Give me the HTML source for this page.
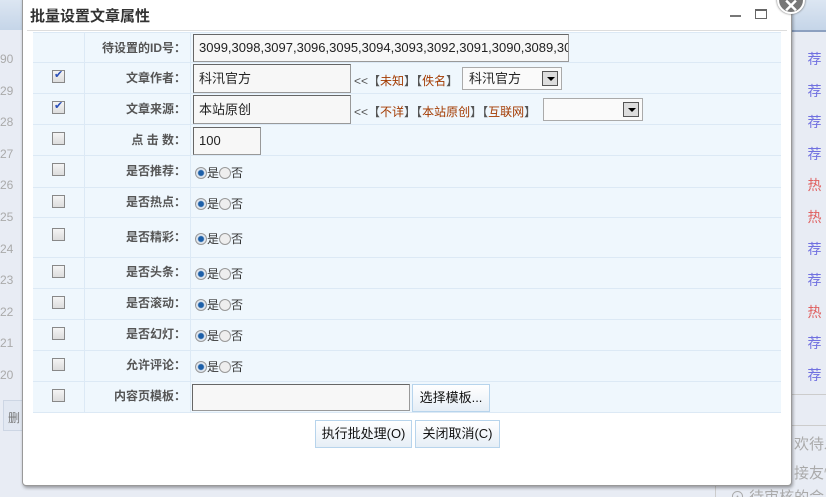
<!DOCTYPE html>
<html><head><meta charset="utf-8"><style>
*{box-sizing:border-box;margin:0;padding:0}
html,body{width:826px;height:497px;overflow:hidden}
body{background:#e8ecf4;font-family:"Liberation Sans","Noto Sans CJK SC",sans-serif;font-size:12px;color:#333;position:relative}
.a{position:absolute;white-space:nowrap}
.dlg{position:absolute;left:22px;top:-6px;width:770px;height:492px;background:#fff;border:1px solid #999;border-radius:4px;box-shadow:1px 2px 3px rgba(0,0,0,.35)}
.row{position:absolute;left:33px;width:748px;background:#eff7fd;border-bottom:1px solid #dce9f5}
.row .c1{position:absolute;left:0;top:0;bottom:0;width:52px;border-right:1px solid #dce9f5}
.row .c2{position:absolute;left:52px;top:0;bottom:0;width:106px;border-right:1px solid #dce9f5;text-align:right;padding-right:4px;font-weight:bold;color:#555;font-size:12px}
.cb{position:absolute;left:19px;width:13px;height:13px;border:1px solid #888;background:linear-gradient(#f4f4f4,#ddd)}
.cb.k::after{content:"✔";position:absolute;left:1px;top:-3px;font-size:11px;color:#2a4fb8}
.inp{position:absolute;background:#f7f7f7;border:1px solid #999;border-top-color:#666;border-left-color:#666;font-size:13px;padding-left:5px;color:#222;white-space:nowrap;overflow:hidden}
.sel{position:absolute;background:#fafafa;border:1px solid #aaa;font-size:13px;padding-left:6px;color:#222}
.sel i{position:absolute;right:3px;top:3px;width:16px;height:15px;border:1px solid #555;background:#ddd}
.sel i::after{content:"";position:absolute;left:4px;top:5px;border-left:4px solid transparent;border-right:4px solid transparent;border-top:4px solid #000}
.r{display:inline-block;width:12px;height:12px;border-radius:50%;border:1px solid #999;background:#eee;vertical-align:-2px}
.r.on{background:radial-gradient(circle,#1c5fa8 0 2.5px,#dfe6ee 3.5px)}
.btn{position:absolute;border:1px solid #b7d4ec;background:linear-gradient(#fff,#e6eef6);font-size:13px;color:#111;text-align:center;white-space:nowrap}
.lk{color:#a33a00}
.gr{color:#555}
</style></head><body>
<div class="a" style="left:0;top:0;width:826px;height:30px;background:linear-gradient(#dce6f2,#c5d5e8)"></div>
<div class="a" style="left:0;top:44px;color:#aaa;font-size:12px;line-height:31.6px;white-space:normal">90<br>29<br>28<br>27<br>26<br>25<br>24<br>23<br>22<br>21<br>20</div>
<div class="a" style="left:3px;top:400px;width:20px;height:31px;border:1px solid #cdd6e4;background:#e2e8f2;color:#777;padding:8px 0 0 4px">删</div>
<div class="a" style="left:803px;top:44px;width:23px;color:#7070e0;font-size:14px;line-height:31.6px;text-align:center;white-space:normal">荐<br>荐<br>荐<br>荐<br><span style="color:#e06060">热</span><br><span style="color:#e06060">热</span><br>荐<br>荐<br><span style="color:#e06060">热</span><br>荐<br>荐</div>
<div class="a" style="left:792px;top:30px;width:34px;height:2px;background:#8ca0c0"></div>
<div class="a" style="left:792px;top:394px;width:34px;height:1px;background:#ccc"></div>
<div class="a" style="left:792px;top:425px;width:34px;height:1px;background:#ccc"></div>
<div class="a" style="left:794px;top:433px;color:#aaa;font-size:15px">欢待发</div>
<div class="a" style="left:794px;top:462px;color:#aaa;font-size:15px">接友情</div>
<div class="a" style="left:730px;top:486px;color:#aaa;font-size:15px">⊙ 待审核的会</div>
<div class="a" style="left:715px;top:486px;width:1px;height:11px;background:#ccc"></div>

<div class="dlg"></div>
<div class="a" style="left:30px;top:5px;font-size:15px;font-weight:bold;color:#333">批量设置文章属性</div>
<div class="a" style="left:730px;top:15px;width:11px;height:2px;background:#777"></div>
<div class="a" style="left:755px;top:9px;width:12px;height:10px;border:1px solid #666;border-top-width:2px"></div>
<div class="a" style="left:777px;top:-14px;width:28px;height:28px;border-radius:50%;background:#777;border:2px solid #fff;box-shadow:0 0 2px #555;color:#fff;text-align:center;font-size:18px;line-height:36px;font-weight:bold">✕</div>
<div class="a" style="left:27px;top:30px;width:760px;height:1px;background:#ddd"></div>

<div class="row" style="top:32px;height:31px;border-top:1px solid #dce9f5"><div class="c1"></div><div class="c2" style="line-height:31px">待设置的ID号：</div></div>
<div class="inp" style="left:193px;top:34px;width:376px;height:28px;line-height:26px">3099,3098,3097,3096,3095,3094,3093,3092,3091,3090,3089,3088</div>

<div class="row" style="top:63px;height:31px"><div class="c1"><span class="cb k" style="top:7px"></span></div><div class="c2" style="line-height:31px">文章作者：</div></div>
<div class="inp" style="left:193px;top:64px;width:158px;height:29px;line-height:27px">科汛官方</div>
<div class="a gr" style="left:354px;top:72px">&lt;&lt;【<span class="lk">未知</span>】【<span class="lk">佚名</span>】</div>
<div class="sel" style="left:462px;top:67px;width:100px;height:23px;line-height:21px">科汛官方<i></i></div>

<div class="row" style="top:94px;height:31px"><div class="c1"><span class="cb k" style="top:7px"></span></div><div class="c2" style="line-height:31px">文章来源：</div></div>
<div class="inp" style="left:193px;top:95px;width:158px;height:29px;line-height:27px">本站原创</div>
<div class="a gr" style="left:354px;top:103px">&lt;&lt;【<span class="lk">不详</span>】【<span class="lk">本站原创</span>】【<span class="lk">互联网</span>】</div>
<div class="sel" style="left:543px;top:98px;width:100px;height:23px"><i></i></div>

<div class="row" style="top:125px;height:31px"><div class="c1"><span class="cb" style="top:7px"></span></div><div class="c2" style="line-height:31px">点 击 数：</div></div>
<div class="inp" style="left:193px;top:127px;width:68px;height:28px;line-height:26px">100</div>

<div class="row" style="top:156px;height:32px"><div class="c1"><span class="cb" style="top:7px"></span></div><div class="c2" style="line-height:30px">是否推荐：</div><div class="a" style="left:162px;top:8px"><span class="r on"></span>是<span class="r"></span>否</div></div>
<div class="row" style="top:188px;height:30px"><div class="c1"><span class="cb" style="top:7px"></span></div><div class="c2" style="line-height:28px">是否热点：</div><div class="a" style="left:162px;top:7px"><span class="r on"></span>是<span class="r"></span>否</div></div>
<div class="row" style="top:218px;height:40px"><div class="c1"><span class="cb" style="top:10px"></span></div><div class="c2" style="line-height:38px">是否精彩：</div><div class="a" style="left:162px;top:12px"><span class="r on"></span>是<span class="r"></span>否</div></div>
<div class="row" style="top:258px;height:31px"><div class="c1"><span class="cb" style="top:7px"></span></div><div class="c2" style="line-height:28px">是否头条：</div><div class="a" style="left:162px;top:7px"><span class="r on"></span>是<span class="r"></span>否</div></div>
<div class="row" style="top:289px;height:31px"><div class="c1"><span class="cb" style="top:7px"></span></div><div class="c2" style="line-height:28px">是否滚动：</div><div class="a" style="left:162px;top:7px"><span class="r on"></span>是<span class="r"></span>否</div></div>
<div class="row" style="top:320px;height:31px"><div class="c1"><span class="cb" style="top:7px"></span></div><div class="c2" style="line-height:28px">是否幻灯：</div><div class="a" style="left:162px;top:7px"><span class="r on"></span>是<span class="r"></span>否</div></div>
<div class="row" style="top:351px;height:31px"><div class="c1"><span class="cb" style="top:7px"></span></div><div class="c2" style="line-height:28px">允许评论：</div><div class="a" style="left:162px;top:7px"><span class="r on"></span>是<span class="r"></span>否</div></div>
<div class="row" style="top:382px;height:31px"><div class="c1"><span class="cb" style="top:7px"></span></div><div class="c2" style="line-height:29px">内容页模板：</div></div>
<div class="inp" style="left:192px;top:384px;width:218px;height:27px"></div>
<div class="btn" style="left:412px;top:384px;width:78px;height:28px;line-height:26px">选择模板...</div>

<div class="btn" style="left:315px;top:420px;width:97px;height:28px;line-height:26px">执行批处理(O)</div>
<div class="btn" style="left:415px;top:420px;width:85px;height:28px;line-height:26px">关闭取消(C)</div>
</body></html>
